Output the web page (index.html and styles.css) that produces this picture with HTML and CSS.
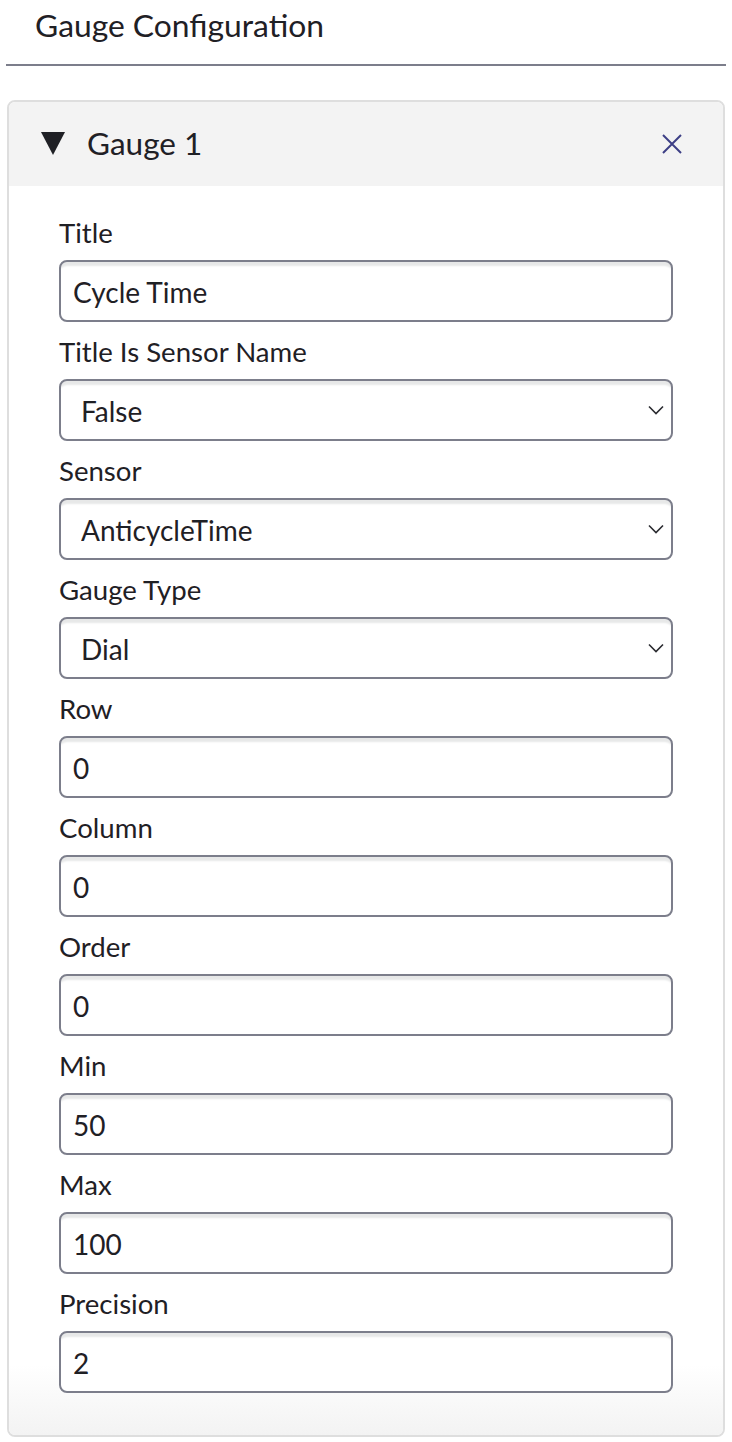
FILE: index.html
```html
<!DOCTYPE html>
<html lang="en">
<head>
    <meta charset="UTF-8">
    <meta name="viewport" content="width=device-width, initial-scale=1.0">
    <title>Gauge Configuration</title>
    <link rel="stylesheet" href="styles.css">
</head>
<body>
    <h2 class="page-title">Gauge Configuration</h2>
    <div class="gauge-card">
        <div class="gauge-header">
            <svg class="caret" width="24" height="23" viewBox="0 0 24 23">
                <polygon points="0,0 24,0 12,23" fill="#1f2025"/>
            </svg>
            <span class="gauge-name">Gauge 1</span>
            <svg class="close-btn" width="20" height="20" viewBox="0 0 20 20">
                <path d="M1 1 L19 19 M19 1 L1 19" stroke="#3d3f85" stroke-width="2" fill="none"/>
            </svg>
        </div>
        <div class="gauge-body">
            <div class="field">
                <label>Title</label>
                <input type="text" value="Cycle Time">
            </div>
            <div class="field">
                <label>Title Is Sensor Name</label>
                <div class="select-wrap">
                    <select><option>False</option><option>True</option></select>
                    <svg class="chevron" width="16" height="10" viewBox="0 0 16 10"><path d="M1 1.5 L8 8.5 L15 1.5" stroke="#2a2b30" stroke-width="1.6" fill="none"/></svg>
                </div>
            </div>
            <div class="field">
                <label>Sensor</label>
                <div class="select-wrap">
                    <select><option>AnticycleTime</option></select>
                    <svg class="chevron" width="16" height="10" viewBox="0 0 16 10"><path d="M1 1.5 L8 8.5 L15 1.5" stroke="#2a2b30" stroke-width="1.6" fill="none"/></svg>
                </div>
            </div>
            <div class="field">
                <label>Gauge Type</label>
                <div class="select-wrap">
                    <select><option>Dial</option></select>
                    <svg class="chevron" width="16" height="10" viewBox="0 0 16 10"><path d="M1 1.5 L8 8.5 L15 1.5" stroke="#2a2b30" stroke-width="1.6" fill="none"/></svg>
                </div>
            </div>
            <div class="field">
                <label>Row</label>
                <input type="text" value="0">
            </div>
            <div class="field">
                <label>Column</label>
                <input type="text" value="0">
            </div>
            <div class="field">
                <label>Order</label>
                <input type="text" value="0">
            </div>
            <div class="field">
                <label>Min</label>
                <input type="text" value="50">
            </div>
            <div class="field">
                <label>Max</label>
                <input type="text" value="100">
            </div>
            <div class="field">
                <label>Precision</label>
                <input type="text" value="2">
            </div>
        </div>
    </div>
</body>
</html>
```

FILE: styles.css
```css
body {
    margin: 0;
    padding: 0;
    background: #fff;
    font-family: Lato, "Open Sans", sans-serif;
    color: #1f2025;
}
.page-title {
    margin: 0 6px;
    padding: 6px 0 0 29px;
    height: 58px;
    font-size: 31.8px;
    font-weight: 400;
    line-height: 38px;
    border-bottom: 2px solid #7c7e8b;
}
.gauge-card {
    margin: 34px 7px 5px 7px;
    border: 2px solid #dedede;
    border-radius: 8px;
    overflow: hidden;
}
.gauge-header {
    display: flex;
    align-items: center;
    height: 84px;
    padding: 0 40px 0 32px;
    background: #f3f3f3;
}
.caret {
    display: block;
    margin-right: 22px;
    margin-top: -2px;
}
.gauge-name {
    font-size: 31.5px;
    flex: 1;
    margin-top: -3px;
}
.close-btn {
    display: block;
    margin-right: 1px;
}
.gauge-body {
    display: flex;
    flex-direction: column;
    gap: 15px;
    padding: 32px 50px 42px 50px;
    background: linear-gradient(to bottom, #fff 0, #fff calc(100% - 70px), #f3f3f3 100%);
}
.field {
    display: flex;
    flex-direction: column;
}
.field label {
    font-size: 27.6px;
    line-height: 30px;
    margin-bottom: 12px;
}
.field input,
.field select {
    box-sizing: border-box;
    width: 100%;
    height: 62px;
    margin: 0;
    border: 2px solid #7c7e8b;
    border-radius: 8px;
    background: #fff;
    box-shadow: inset 0 7px 2px -3px #e7e8e8;
    font-family: Lato, "Open Sans", sans-serif;
    font-size: 28px;
    color: #1f2025;
    outline: none;
}
.field input {
    padding: 2px 12px 0 12px;
}
.select-wrap {
    position: relative;
}
.field select {
    -webkit-appearance: none;
    appearance: none;
    padding: 2px 40px 0 20px;
}
.chevron {
    position: absolute;
    right: 9px;
    top: 26px;
    pointer-events: none;
}
```
